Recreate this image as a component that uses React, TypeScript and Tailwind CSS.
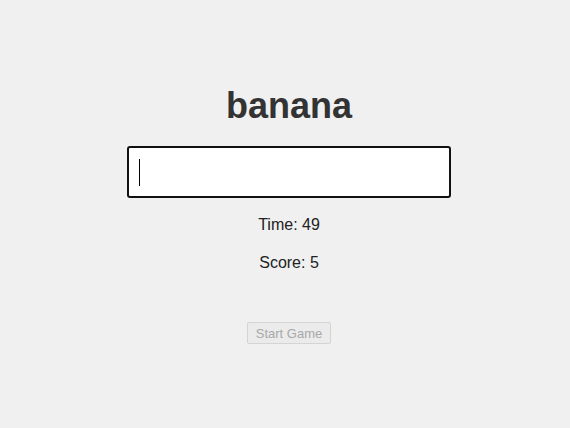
export default function App() {
  return (
    <div className="min-h-[428px] w-full bg-[#f0f0f0] pl-[8px] font-['Liberation_Sans',Arial,sans-serif] text-[#222]">
      <div className="flex flex-col items-center pt-[85px]">
        <h1 className="text-[36px] font-bold leading-[42px] text-[#333]">banana</h1>
        <div className="mt-[19px] flex h-[52px] w-[324px] items-center rounded-[3px] border-2 border-[#111] bg-white pl-[10px]">
          <span className="h-[27px] w-px bg-black" />
        </div>
        <p className="mt-[15px] text-[16px] leading-[24px]">Time: 49</p>
        <p className="mt-[14px] text-[16px] leading-[24px]">Score: 5</p>
        <button
          disabled
          className="mt-[47px] h-[22px] rounded-[2px] border border-[#d4d4d4] bg-[#ebebeb] px-[8px] text-[13px] leading-[15px] text-[#a8a8a8]"
        >
          Start Game
        </button>
      </div>
    </div>
  );
}
